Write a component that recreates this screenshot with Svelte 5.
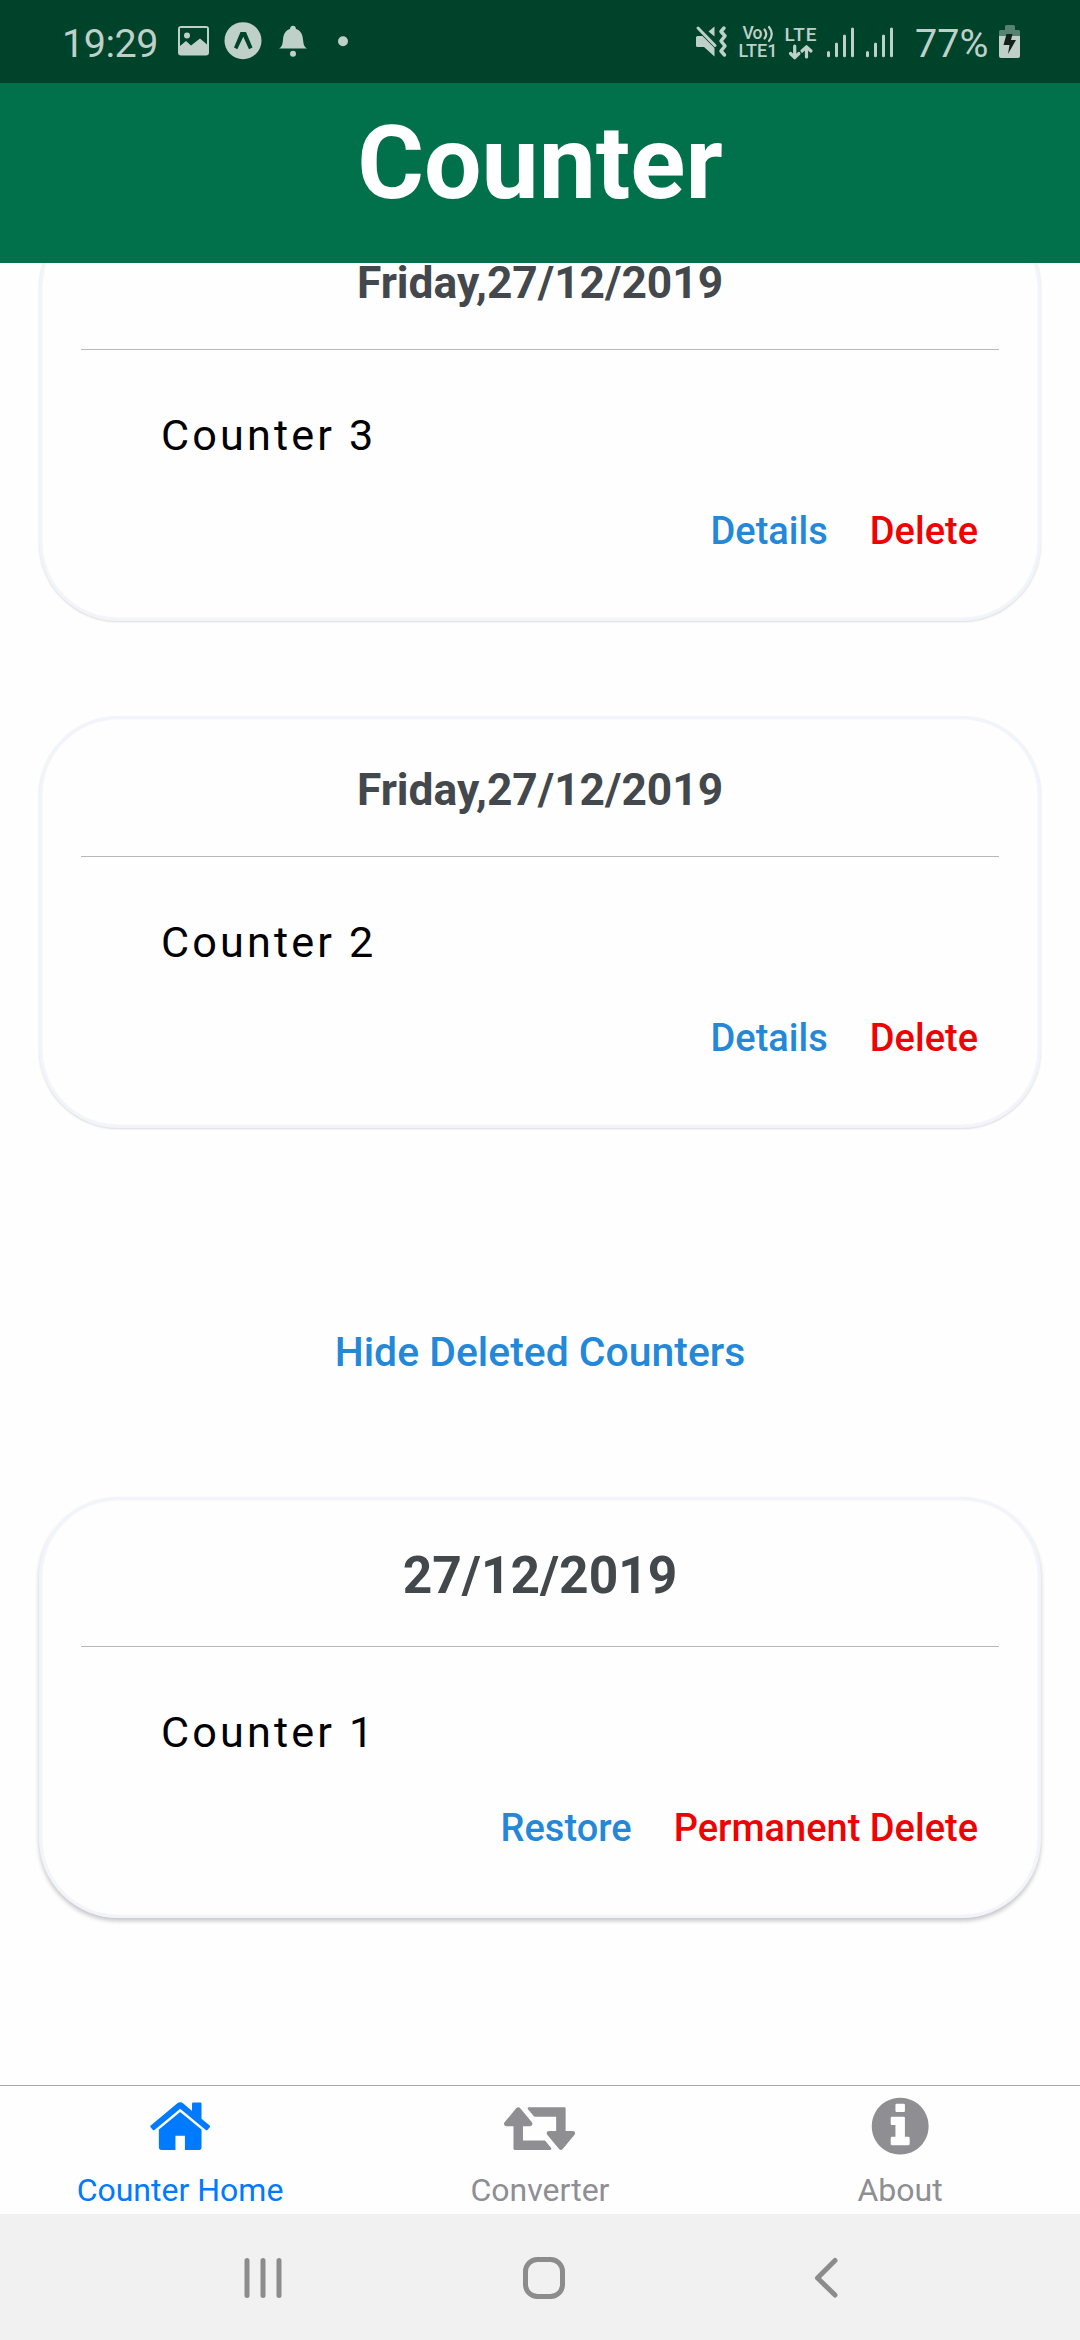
<script>
  const counters = [
    { date: 'Friday,27/12/2019', name: 'Counter 3' },
    { date: 'Friday,27/12/2019', name: 'Counter 2' },
  ];
  const deleted = { date: '27/12/2019', name: 'Counter 1' };
  const tabs = [
    {
      label: 'Counter Home',
      width: 1792,
      active: true,
      path: 'M1472 992v480q0 26-19 45t-45 19h-384v-384h-256v384h-384q-26 0-45-19t-19-45v-480q0-1 .5-3t.5-3l575-474 575 474q1 2 1 6zm223-69l-62 74q-8 9-21 11h-3q-13 0-21-7l-692-577-692 577q-12 8-24 7-13-2-21-11l-62-74q-8-10-7-23.5t11-21.5l719-599q32-26 76-26t76 26l244 204v-195q0-14 9-23t23-9h192q14 0 23 9t9 23v408l219 182q10 8 11 21.5t-7 23.5z',
    },
    {
      label: 'Converter',
      width: 1920,
      active: false,
      path: 'M1280 1504q0 13-9.5 22.5t-22.5 9.5h-960q-8 0-13.5-2t-9-7-5.5-8-3-11.5-1-11.5v-600h-192q-26 0-45-19t-19-45q0-24 15-41l320-384q19-22 49-22t49 22l320 384q15 17 15 41 0 26-19 45t-45 19h-192v384h576q16 0 25 11l160 192q7 10 7 21zm640-416q0 24-15 41l-320 384q-20 23-49 23t-49-23l-320-384q-15-17-15-41 0-26 19-45t45-19h192v-384h-576q-16 0-25-12l-160-192q-7-9-7-20 0-13 9.5-22.5t22.5-9.5h960q8 0 13.5 2t9 7 5.5 8 3 11.5 1 11.5v600h192q26 0 45 19t19 45z',
    },
    {
      label: 'About',
      width: 1792,
      active: false,
      path: 'M1152 1376v-160q0-14-9-23t-23-9h-96v-512q0-14-9-23t-23-9h-320q-14 0-23 9t-9 23v160q0 14 9 23t23 9h96v320h-96q-14 0-23 9t-9 23v160q0 14 9 23t23 9h448q14 0 23-9t9-23zm-128-896v-160q0-14-9-23t-23-9h-192q-14 0-23 9t-9 23v160q0 14 9 23t23 9h192q14 0 23-9t9-23zm640 416q0 209-103 385.5t-279.5 279.5-385.5 103-385.5-103-279.5-279.5-103-385.5 103-385.5 279.5-279.5 385.5-103 385.5 103 279.5 279.5 103 385.5z',
    },
  ];
</script>

<div class="screen">
  <div class="status">
    <span class="time">19:29</span>
    <svg class="left-icons" width="180" height="83" viewBox="175 0 180 83">
      <path fill-rule="evenodd" d="M181 26h25a3 3 0 0 1 3 3v23.500a3 3 0 0 1-3 3h-25a3 3 0 0 1-3-3V29a3 3 0 0 1 3-3zM180 28v18l6-5 5 4.500 9-7 7 6V28z" />
      <circle cx="187" cy="35.500" r="3" />
      <circle cx="243" cy="40.700" r="18.500" />
      <path class="cut" d="M240.500 32h5.500l6.500 15.500-3.500 1.700-5.700-12.500-6 12.500-3.300-1.700z" />
      <path d="M279 48.500c3.500-2 3.500-5 4-9 .5-6 3-9.500 7-10.500 0-4.500 6-4.500 6 0 4 1 6.500 4.500 7 10.500.5 4 .5 7 4 9z" />
      <circle cx="293" cy="53.700" r="3" />
      <circle cx="343" cy="41.300" r="5" />
    </svg>
    <svg class="right-icons" width="210" height="83" viewBox="690 0 210 83">
      <path d="M697.500 36h5l12 12v8.500L704 47h-6.500q-1.500 0-1.500-1.500v-8q0-1.500 1.500-1.500zM708.500 31.500l6-5v10z" />
      <path class="line" d="M698 28l17 17.500" stroke-width="3" />
      <path class="line" d="M724 28l-3 3.500 4 4.500-4 5 4 5-4 5 3.500 4" stroke-width="3.500" />
      <text x="742.500" y="39" font-size="17.500" textLength="20">Vo</text>
      <path class="line" d="M764.500 29.500q3.500 4.500 0 9M769 27q5.500 7 0 14" stroke-width="2.200" />
      <text x="738.500" y="57" font-size="18" textLength="39">LTE1</text>
      <text x="784.500" y="41" font-size="19" textLength="32">LTE</text>
      <path class="line" d="M794.700 46v11M790.500 53.500l4.200 4.200 4.200-4.200M806.500 57V47M802 51l4.500-4.200 4.500 4.200" stroke-width="3.200" />
      <path class="line" d="M828.500 52.500v3.200M836.500 44v11.700M844.500 36v19.700M852.500 29v26.700M867.500 52.500v3.200M875.500 44v11.700M883.500 36v19.700M891.500 29v26.700" stroke-width="3" />
    </svg>
    <span class="percent">77%</span>
    <svg class="battery" width="22" height="83" viewBox="999 0 22 83">
      <path opacity=".45" d="M1005 30v-3.500q0-1.500 1.500-1.500h7q1.500 0 1.500 1.500V30h3.500q1.500 0 1.500 1.500V36h-21v-4.500q0-1.500 1.500-1.500z" />
      <path d="M999 36h21v20q0 2-2 2h-17q-2 0-2-2z" />
      <path class="bolt" d="M1006.500 34h6l-1.500 6h5l-8 14 1.500-9h-6z" />
    </svg>
  </div>

  <header>Counter</header>

  <main>
    {#each counters as counter}
      <section class="card">
        <h2>{counter.date}</h2>
        <p>{counter.name}</p>
        <div class="actions">
          <span class="link">Details</span>
          <span class="danger">Delete</span>
        </div>
      </section>
    {/each}
    <div class="toggle link">Hide Deleted Counters</div>
    <section class="card deleted">
      <h2>{deleted.date}</h2>
      <p>{deleted.name}</p>
      <div class="actions">
        <span class="link">Restore</span>
        <span class="danger">Permanent Delete</span>
      </div>
    </section>
  </main>

  <nav class="tabs">
    {#each tabs as tab}
      <div class="tab" class:active={tab.active}>
        <svg width={tab.width / 27} height={1792 / 27} viewBox="0 0 {tab.width} 1792"><path d={tab.path} /></svg>
        <span>{tab.label}</span>
      </div>
    {/each}
  </nav>

  <div class="system">
    <svg width="38" height="42" viewBox="0 0 38 42"><path d="M3 3.500v35M19 3.500v35M35 3.500v35" stroke-width="5" /></svg>
    <svg width="42" height="42" viewBox="0 0 42 42"><rect x="2.500" y="2.500" width="37" height="37" rx="12" stroke-width="5" /></svg>
    <svg width="24" height="42" viewBox="0 0 24 42"><path d="M21 3.500L3.500 21 21 38" stroke-width="5" /></svg>
  </div>
</div>

<style>
  .screen {
    width: 1080px;
    height: 2340px;
    display: flex;
    flex-direction: column;
    overflow: hidden;
    background: #fefefe;
    font-family: Roboto, sans-serif;
  }
  .status {
    height: 83px;
    flex: none;
    display: flex;
    background: #00432b;
    color: #bfd0c9;
    fill: #bfd0c9;
    font-size: 39.500px;
    line-height: 87px;
    white-space: nowrap;
  }
  .time {
    width: 113px;
    padding-left: 62px;
    letter-spacing: -0.5px;
  }
  .left-icons {
    margin-right: 335px;
  }
  .percent {
    width: 84px;
    padding-left: 15px;
  }
  .status svg,
  .status span {
    flex: none;
  }
  .status text {
    font-weight: 500;
  }
  .line {
    fill: none;
    stroke: #bfd0c9;
    stroke-linecap: round;
    stroke-linejoin: round;
  }
  .cut {
    fill: #00432b;
  }
  .bolt {
    fill: #12211b;
  }
  header {
    height: 180px;
    flex: none;
    background: #00714a;
    color: #fff;
    font-size: 102px;
    font-weight: 700;
    line-height: 160px;
    text-align: center;
  }
  main {
    height: 1822px;
    flex: none;
    display: flex;
    flex-direction: column;
    overflow: hidden;
  }
  .card {
    box-sizing: border-box;
    height: 412px;
    flex: none;
    margin: 0 39px 95px;
    padding: 41px 39px 0;
    border: 3px solid #f1f4fb;
    border-radius: 79px;
    background: #fefefe;
    box-shadow:
      0 1px 2px rgba(0, 0, 0, 0.14),
      inset 0 0 1px rgba(60, 90, 120, 0.2);
  }
  .card:first-child {
    margin-top: -54px;
  }
  .card:nth-child(2) {
    margin-bottom: 194px;
  }
  h2 {
    margin: 0;
    padding-bottom: 36px;
    border-bottom: 1px solid #b6b8ba;
    color: #43484d;
    font-size: 44.300px;
    font-weight: 700;
    line-height: 60px;
    text-align: center;
  }
  p {
    margin: 56px 0 35px 80px;
    color: #000;
    font-size: 43.200px;
    line-height: 60px;
    letter-spacing: 3.150px;
  }
  .actions {
    display: flex;
    justify-content: flex-end;
    gap: 42px;
    padding-right: 21px;
    font-size: 38px;
    font-weight: 500;
    line-height: 60px;
  }
  .link {
    color: #2488d9;
  }
  .danger {
    color: #ee0202;
  }
  .toggle {
    flex: none;
    margin-bottom: 115px;
    font-size: 40.900px;
    font-weight: 500;
    line-height: 60px;
    text-align: center;
  }
  .deleted {
    height: 421px;
    margin-bottom: 0;
    box-shadow:
      0 3px 4px rgba(0, 0, 0, 0.22),
      inset 0 0 1px rgba(60, 90, 120, 0.2);
  }
  .deleted h2 {
    padding-bottom: 35px;
    font-size: 51.500px;
    line-height: 70px;
  }
  .tabs {
    box-sizing: border-box;
    height: 129px;
    flex: none;
    display: flex;
    padding-top: 7.300px;
    border-top: 1px solid #a7a7aa;
    background: #fefefe;
  }
  .tab {
    flex: 1;
    display: flex;
    flex-direction: column;
    align-items: center;
    gap: 10px;
    color: #8e8e93;
    fill: #8e8e93;
    font-size: 32px;
    line-height: 40px;
  }
  .active {
    color: #007aff;
    fill: #007aff;
  }
  .system {
    box-sizing: border-box;
    height: 126px;
    flex: none;
    display: flex;
    align-items: center;
    background: #f1f1f1;
    padding: 2px 0 0 244px;
  }
  .system svg {
    flex: none;
    fill: none;
    stroke: #8c8c8c;
    stroke-linecap: round;
    stroke-linejoin: round;
  }
  .system svg + svg {
    margin-left: 241px;
  }
  .system svg:last-child {
    margin-left: 249px;
  }
</style>
